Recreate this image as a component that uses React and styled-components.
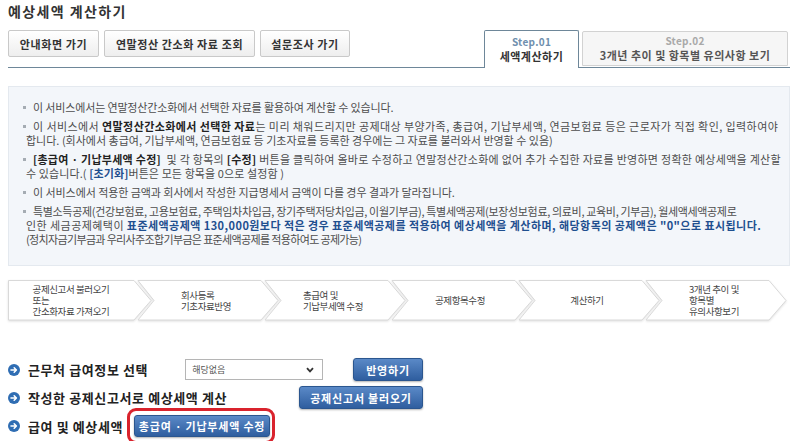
import React from 'react';
import styled, { createGlobalStyle } from 'styled-components';

const GlobalStyle = createGlobalStyle`
  html, body {
    margin: 0;
    padding: 0;
    background: #ffffff;
  }
  body {
    font-family: "Noto Sans CJK KR", "Noto Sans", sans-serif;
    color: #444;
  }
`;

const Page = styled.div`
  width: 782px;
  padding: 0 10px 0 8px;
  height: 441px;
  overflow: hidden;
`;

const Title = styled.h1`
  margin: 0;
  height: 22px;
  line-height: 22px;
  font-size: 14px;
  font-weight: 700;
  letter-spacing: 1.4px;
  color: #333;
`;

/* 상단 버튼 + 탭 영역 */
const HeaderRow = styled.div`
  margin-top: 8px;
  display: flex;
  align-items: flex-end;
  border-bottom: 1px solid #6e8799;
`;

const LinkButtons = styled.div`
  display: flex;
  gap: 5px;
  margin-bottom: 10px;
`;

const GrayButton = styled.button`
  height: 27px;
  width: ${(p) => p.$width}px;
  padding: 0;
  font-family: inherit;
  font-size: 11px;
  font-weight: 700;
  letter-spacing: 0.6px;
  color: #333;
  background: linear-gradient(#ffffff, #eeeeee);
  border: 1px solid #c9c9c9;
  border-radius: 2px;
  cursor: pointer;
`;

const Tabs = styled.div`
  margin-left: auto;
  margin-right: 2px;
  display: flex;
  align-items: flex-end;
  gap: 3px;
`;

const Tab = styled.div`
  width: ${(p) => p.$width}px;
  height: ${(p) => (p.$active ? 38 : 35)}px;
  margin-bottom: ${(p) => (p.$active ? -1 : 1)}px;
  box-sizing: border-box;
  display: flex;
  flex-direction: column;
  align-items: center;
  justify-content: center;
  gap: 1px;
  background: ${(p) => (p.$active ? '#ffffff' : '#f6f6f6')};
  border: 1px solid ${(p) => (p.$active ? '#6e8799' : '#d2d2d2')};
  border-bottom: ${(p) => (p.$active ? 'none' : '1px solid #d2d2d2')};
  border-radius: 2px 2px 0 0;
  .step {
    font-size: 10px;
    font-weight: 700;
    line-height: 12px;
    letter-spacing: 0.3px;
    color: ${(p) => (p.$active ? '#6f8fae' : '#a9a9a9')};
  }
  .name {
    font-size: 11px;
    font-weight: 700;
    line-height: 14px;
    letter-spacing: 0.5px;
    color: ${(p) => (p.$active ? '#333' : '#555')};
  }
`;

/* 안내 박스 */
const InfoBox = styled.ul`
  margin: 18px 0 0;
  list-style: none;
  height: 180px;
  box-sizing: border-box;
  padding: 13px 10px 20px 17px;
  background: #f3f6fa;
  border: 1px solid #e4e9ef;
  font-size: 11px;
  line-height: 14px;
  color: #4d4d4d;
`;

const InfoItem = styled.li`
  margin-bottom: 5px;
  white-space: nowrap;
  &::before {
    content: '';
    display: inline-block;
    width: 3px;
    height: 3px;
    margin: 0 7px 3px -3px;
    vertical-align: middle;
    background: #a5acb3;
  }
  b {
    color: #222;
  }
  .blue {
    color: #1f4f8f;
  }
`;

const Line = styled.span`
  letter-spacing: ${(p) => p.$ls}px;
`;

/* 진행 단계 화살표 */
const Steps = styled.div`
  margin-top: 14px;
  display: flex;
  height: 41px;
`;

const StepItem = styled.div`
  position: relative;
  width: 144px;
  height: 41px;
  flex: none;
  margin-left: ${(p) => (p.$first ? 0 : -17)}px;
  display: flex;
  align-items: center;
  justify-content: center;
  padding: 0 18px 0 ${(p) => (p.$first ? 0 : 16)}px;
  box-sizing: border-box;
  svg {
    position: absolute;
    inset: 0;
    filter: drop-shadow(0 1px 1px rgba(0, 0, 0, 0.12));
  }
`;

const StepText = styled.div`
  position: relative;
  font-size: 9.5px;
  line-height: 11px;
  letter-spacing: -0.4px;
  color: #444;
  white-space: pre-line;
  text-align: left;
`;

/* 하단 계산 영역 */
const Rows = styled.div`
  margin-top: 37px;
  width: 415px;
  display: flex;
  flex-direction: column;
`;

const Row = styled.div`
  display: flex;
  align-items: center;
  height: ${(p) => p.$h || 23}px;
  margin-top: ${(p) => p.$mt || 0}px;
  flex: none;
`;

const Label = styled.div`
  display: flex;
  align-items: center;
  gap: 8px;
  font-size: 13px;
  font-weight: 700;
  letter-spacing: 0.6px;
  color: #222;
  white-space: nowrap;
`;

const Select = styled.div`
  margin-left: ${(p) => p.$ml}px;
  width: 138px;
  height: 21px;
  box-sizing: border-box;
  border: 1px solid #b5b5b5;
  background: #fff;
  display: flex;
  align-items: center;
  justify-content: space-between;
  padding: 0 8px 0 6px;
  font-size: 9px;
  color: #555;
`;

const BlueButton = styled.button`
  margin-left: ${(p) => (p.$push ? 'auto' : '0')};
  height: ${(p) => p.$h || 23}px;
  width: ${(p) => p.$width}px;
  padding: 0;
  font-family: inherit;
  font-size: 11px;
  font-weight: 700;
  letter-spacing: 0.8px;
  color: #fff;
  background: linear-gradient(#5a89c7, #2f5e9f);
  border: 1px solid #2b568f;
  border-radius: 3px;
  box-shadow: 0 1px 2px rgba(0, 0, 0, 0.3);
  cursor: pointer;
`;

const Highlight = styled.div`
  margin-left: 4px;
  padding: 4px 2px 4px 4px;
  border: 3px solid #d9232d;
  border-radius: 9px;
  display: flex;
`;

const CircleArrow = () => (
  <svg width="12" height="12" viewBox="0 0 12 12">
    <circle cx="6" cy="6" r="6" fill="#2f6db3" />
    <path d="M3 6h5.2M6.2 3.8 8.4 6 6.2 8.2" stroke="#fff" strokeWidth="1.6" fill="none" strokeLinecap="round" strokeLinejoin="round" />
  </svg>
);

const Chevron = ({ first }) => (
  <svg width="144" height="41" viewBox="0 0 144 41">
    <polygon
      points={
        first
          ? '0.5,0.5 126,0.5 143,20.5 126,40 0.5,40'
          : '3,0.5 126,0.5 143,20.5 126,40 3,40 19,20.5'
      }
      fill="#ffffff"
      stroke="#d9d9d9"
    />
  </svg>
);

const steps = [
  '공제신고서 불러오기\n또는\n간소화자료 가져오기',
  '회사등록\n기초자료반영',
  '총급여 및\n기납부세액 수정',
  '공제항목수정',
  '계산하기',
  '3개년 추이 및\n항목별\n유의사항보기',
];

const App = () => {
  return (
    <>
      <GlobalStyle />
      <Page>
        <Title>예상세액 계산하기</Title>

        <HeaderRow>
          <LinkButtons>
            <GrayButton $width={91}>안내화면 가기</GrayButton>
            <GrayButton $width={151}>연말정산 간소화 자료 조회</GrayButton>
            <GrayButton $width={90}>설문조사 가기</GrayButton>
          </LinkButtons>
          <Tabs>
            <Tab $active $width={95}>
              <span className="step">Step.01</span>
              <span className="name">세액계산하기</span>
            </Tab>
            <Tab $width={206}>
              <span className="step">Step.02</span>
              <span className="name">3개년 추이 및 항목별 유의사항 보기</span>
            </Tab>
          </Tabs>
        </HeaderRow>

        <InfoBox>
          <InfoItem>
            <Line $ls={-0.15}>이 서비스에서는 연말정산간소화에서 선택한 자료를 활용하여 계산할 수 있습니다.</Line>
          </InfoItem>
          <InfoItem>
            <Line $ls={0.42}>
              이 서비스에서 <b>연말정산간소화에서 선택한 자료</b>는 미리 채워드리지만 공제대상 부양가족, 총급여,
              기납부세액, 연금보험료 등은 근로자가 직접 확인, 입력하여야
            </Line>
            <br />
            <Line $ls={0}>
              합니다. (회사에서 총급여, 기납부세액, 연금보험료 등 기초자료를 등록한 경우에는 그 자료를 불러와서 반영할
              수 있음)
            </Line>
          </InfoItem>
          <InfoItem>
            <Line $ls={0.28}>
              <b>[총급여 · 기납부세액 수정]</b>&nbsp; 및 각 항목의 <b>[수정]</b> 버튼을 클릭하여 올바로 수정하고
              연말정산간소화에 없어 추가 수집한 자료를 반영하면 정확한 예상세액을 계산할
            </Line>
            <br />
            <Line $ls={0.1}>
              수 있습니다.( <b className="blue">[초기화]</b>버튼은 모든 항목을 0으로 설정함 )
            </Line>
          </InfoItem>
          <InfoItem>
            <Line $ls={-0.06}>
              이 서비스에서 적용한 금액과 회사에서 작성한 지급명세서 금액이 다를 경우 결과가 달라집니다.
            </Line>
          </InfoItem>
          <InfoItem>
            <Line $ls={-0.33}>
              특별소득공제(건강보험료, 고용보험료, 주택임차차입금, 장기주택저당차입금, 이월기부금),
              특별세액공제(보장성보험료, 의료비, 교육비, 기부금), 월세액세액공제로
            </Line>
            <br />
            <Line $ls={0.44}>
              인한 세금공제혜택이{' '}
              <b className="blue">
                표준세액공제액 130,000원보다 적은 경우 표준세액공제를 적용하여 예상세액을 계산하며, 해당항목의
                공제액은 "0"으로 표시됩니다.
              </b>
            </Line>
            <br />
            <Line $ls={-0.65}>(정치자금기부금과 우리사주조합기부금은 표준세액공제를 적용하여도 공제가능)</Line>
          </InfoItem>
        </InfoBox>

        <Steps>
          {steps.map((text, i) => (
            <StepItem key={i} $first={i === 0}>
              <Chevron first={i === 0} />
              <StepText>{text}</StepText>
            </StepItem>
          ))}
        </Steps>

        <Rows>
          <Row>
            <Label>
              <CircleArrow />
              근무처 급여정보 선택
            </Label>
            <Select $ml={37}>
              <span>해당없음</span>
              <svg width="8" height="6" viewBox="0 0 8 6">
                <path d="M1 1.2 4 4.4 7 1.2" stroke="#333" strokeWidth="1.8" fill="none" />
              </svg>
            </Select>
            <BlueButton $push $width={70}>반영하기</BlueButton>
          </Row>
          <Row $mt={5}>
            <Label>
              <CircleArrow />
              작성한 공제신고서로 예상세액 계산
            </Label>
            <BlueButton $push $width={124}>공제신고서 불러오기</BlueButton>
          </Row>
          <Row $h={36} $mt={-1}>
            <Label>
              <CircleArrow />
              급여 및 예상세액
            </Label>
            <Highlight>
              <BlueButton $width={136} $h={22}>총급여 · 기납부세액 수정</BlueButton>
            </Highlight>
          </Row>
        </Rows>
      </Page>
    </>
  );
};

export default App;
